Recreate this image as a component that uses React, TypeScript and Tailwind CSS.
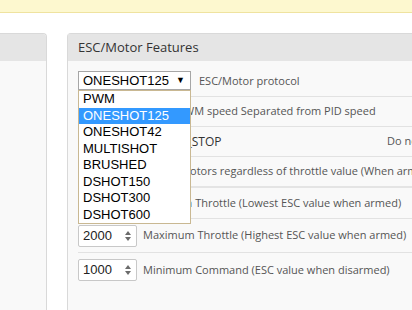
import React from 'react'

const sans = { fontFamily: '"Open Sans", "Liberation Sans", sans-serif' }
const arial = { fontFamily: '"Liberation Sans", Arial, sans-serif' }

const protocols = ['PWM', 'ONESHOT125', 'ONESHOT42', 'MULTISHOT', 'BRUSHED', 'DSHOT150', 'DSHOT300', 'DSHOT600']

// ── Small pieces ───────────────────────────────────────────────────────────────

function NumberBox({ value }: { value: string }) {
  return (
    <div className="flex items-center w-[59px] h-[22px] border border-[#c8c8c8] rounded-[2px] bg-white shrink-0">
      <span className="flex-1 pl-[4px] text-[13px] text-[#222]" style={arial}>{value}</span>
      <svg width="8" height="12" viewBox="0 0 8 12" className="mr-[4px]">
        <path d="M4 1 L7 5 L1 5 Z" fill="#6b6b6b" />
        <path d="M4 11 L7 7 L1 7 Z" fill="#6b6b6b" />
      </svg>
    </div>
  )
}

function Toggle() {
  return <div className="w-[34px] h-[18px] rounded-full bg-[#ddd] shrink-0" />
}

function Row({ children, className = '' }: { children: React.ReactNode; className?: string }) {
  return (
    <div className={`ml-[10px] flex items-center border-b border-[#e2e2e2] ${className}`}>
      {children}
    </div>
  )
}

// ── Page ───────────────────────────────────────────────────────────────────────

export default function App() {
  return (
    <div className="w-[412px] h-[310px] overflow-hidden bg-white relative" style={sans}>
      {/* notice banner */}
      <div className="h-[13px] bg-[#fdf8cf] border-b border-[#efe3a0]" />

      <div className="flex gap-[20px] pt-[20px]">
        {/* left panel (cut off) */}
        <div className="w-[47px] h-[300px] shrink-0 rounded-tr-[4px] border-r border-t border-[#d9d9d9] bg-[#f9f9f9] overflow-hidden">
          <div className="h-[27px] bg-[#e5e5e5]" />
        </div>

        {/* ESC/Motor panel */}
        <div className="w-[380px] h-[300px] shrink-0 rounded-tl-[4px] border-l border-t border-[#d9d9d9] bg-[#f9f9f9] relative">
          <div className="h-[27px] bg-[#e5e5e5] flex items-center pl-[10px] text-[13px] text-[#333]">
            ESC/Motor Features
          </div>

          <Row className="h-[36px] !items-start pt-[10px]">
            <div
              className="w-[113px] h-[19px] border border-[#a6a6a6] bg-white flex items-center pl-[4px] text-[13px] text-black"
              style={arial}
            >
              <span className="flex-1">ONESHOT125</span>
              <span className="text-[9px] mr-[5px]">▼</span>
            </div>
            <span className="ml-[8px] text-[11px] leading-[19px] text-[#555]">ESC/Motor protocol</span>
          </Row>

          <Row className="h-[30px]">
            <Toggle />
            <span className="ml-[31px] text-[11px] text-[#555] whitespace-nowrap">Motor PWM speed Separated from PID speed</span>
          </Row>

          <Row className="h-[30px]">
            <Toggle />
            <span className="ml-[31px] text-[12px] text-[#333] w-[244px] shrink-0">MOTOR_STOP</span>
            <span className="text-[11px] text-[#555] whitespace-nowrap">Do not spin the motors when armed</span>
          </Row>

          <Row className="h-[31px] border-b-2 border-b-[#e4e4e4]">
            <span className="ml-[57px] text-[11px] text-[#555] whitespace-nowrap">
              Spin the motors regardless of throttle value (When armed)
            </span>
          </Row>

          <Row className="h-[31px]">
            <NumberBox value="1070" />
            <span className="ml-[6px] text-[11px] text-[#555] whitespace-nowrap">Minimum Throttle (Lowest ESC value when armed)</span>
          </Row>

          <Row className="h-[34px]">
            <NumberBox value="2000" />
            <span className="ml-[6px] text-[11px] text-[#555] whitespace-nowrap">Maximum Throttle (Highest ESC value when armed)</span>
          </Row>

          <Row className="h-[34px] border-b-0">
            <NumberBox value="1000" />
            <span className="ml-[6px] text-[11px] text-[#555] whitespace-nowrap">Minimum Command (ESC value when disarmed)</span>
          </Row>

          {/* open protocol list */}
          <div
            className="absolute left-[10px] top-[56px] w-[113px] border border-[#c9b892] bg-white text-[13px] text-black"
            style={arial}
          >
            {protocols.map(p => (
              <div
                key={p}
                className={`h-[16.5px] leading-[16.5px] pl-[4px] ${p === 'ONESHOT125' ? 'bg-[#3399ff] text-white' : ''}`}
              >
                {p}
              </div>
            ))}
          </div>
        </div>
      </div>
    </div>
  )
}
